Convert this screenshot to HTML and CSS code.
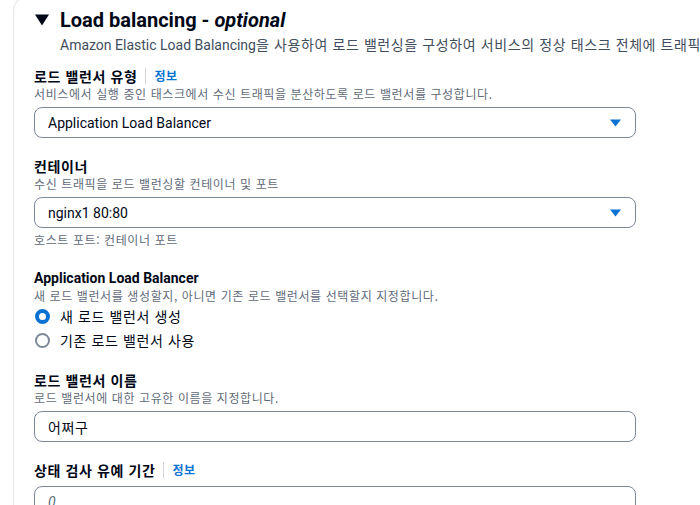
FILE: index.html
```html
<!DOCTYPE html>
<html lang="ko">
<head>
<meta charset="utf-8">
<link rel="stylesheet" href="styles.css">
</head>
<body>
<div class="card">
  <div class="header">
    <h2 class="title">
      <svg class="caret-down" width="14" height="12" viewBox="0 0 14 12"><path d="M0 0.5 H14 L7 11.5 Z" fill="#000716"/></svg>
      <span>Load balancing - <em>optional</em></span>
    </h2>
    <p class="intro">Amazon Elastic Load Balancing<span class="ko">을 사용하여 로드 밸런싱을 구성하여 서비스의 정상 태스크 전체에 트래픽을 고르게 분산합니다.</span></p>
  </div>

  <div class="fields">
    <div class="field">
      <div class="label"><span class="ko">로드 밸런서 유형</span><span class="divider"></span><a class="info ko">정보</a></div>
      <div class="desc ko">서비스에서 실행 중인 태스크에서 수신 트래픽을 분산하도록 로드 밸런서를 구성합니다.</div>
      <div class="control select">
        <span>Application Load Balancer</span>
        <svg class="sel-caret" width="11" height="8" viewBox="0 0 11 8"><path d="M0 0.5 H11 L5.5 7.5 Z" fill="#0972d3"/></svg>
      </div>
    </div>

    <div class="field">
      <div class="label ko">컨테이너</div>
      <div class="desc ko">수신 트래픽을 로드 밸런싱할 컨테이너 및 포트</div>
      <div class="control select">
        <span>nginx1 80:80</span>
        <svg class="sel-caret" width="11" height="8" viewBox="0 0 11 8"><path d="M0 0.5 H11 L5.5 7.5 Z" fill="#0972d3"/></svg>
      </div>
      <div class="hint ko">호스트 포트: 컨테이너 포트</div>
    </div>

    <div class="field">
      <div class="label">Application Load Balancer</div>
      <div class="desc ko">새 로드 밸런서를 생성할지, 아니면 기존 로드 밸런서를 선택할지 지정합니다.</div>
      <div class="radios">
        <div class="radio"><span class="dot checked"></span><span class="ko">새 로드 밸런서 생성</span></div>
        <div class="radio"><span class="dot"></span><span class="ko">기존 로드 밸런서 사용</span></div>
      </div>
    </div>

    <div class="field">
      <div class="label ko">로드 밸런서 이름</div>
      <div class="desc ko">로드 밸런서에 대한 고유한 이름을 지정합니다.</div>
      <div class="control input"><span class="ko">어쩌구</span></div>
    </div>

    <div class="field">
      <div class="label"><span class="ko">상태 검사 유예 기간</span><span class="divider"></span><a class="info ko">정보</a></div>
      <div class="control input no-desc"><span class="placeholder">0</span></div>
    </div>
  </div>
</div>
</body>
</html>
```

FILE: styles.css
```css
* { box-sizing: border-box; }
html, body {
  margin: 0;
  padding: 0;
  background: #ffffff;
  overflow: hidden;
  width: 700px;
  height: 505px;
}
body {
  font-family: Roboto, "Noto Sans CJK KR", sans-serif;
  color: #000716;
}
.ko {
  font-family: "Noto Sans CJK KR", sans-serif;
  letter-spacing: 0.6px;
}
.card {
  margin-left: 13px;
  margin-top: -5px;
  width: 687px;
  height: 515px;
  overflow: hidden;
  border: 1px solid #e3e6ea;
  border-right: none;
  border-bottom: none;
  border-radius: 16px 0 0 0;
  padding: 12px 0 0 20px;
}
.title {
  margin: 0;
  display: flex;
  align-items: center;
  font-size: 20px;
  line-height: 24px;
  font-weight: 700;
  height: 24px;
}
.title em { font-style: italic; font-weight: 700; }
.caret-down {
  margin-left: 1px;
  margin-right: 11px;
  flex: none;
}
.intro {
  margin: 2px 0 0 26px;
  font-size: 14px;
  line-height: 20px;
  color: #414d5c;
  white-space: nowrap;
}
.fields {
  margin-top: 11px;
  display: flex;
  flex-direction: column;
  gap: 18px;
  width: 602px;
}
.field {
  display: flex;
  flex-direction: column;
}
.label {
  display: flex;
  align-items: center;
  font-size: 14px;
  line-height: 20px;
  font-weight: 700;
  color: #000716;
}
.divider {
  display: inline-block;
  width: 1px;
  height: 16px;
  background: #d1d5db;
  margin: 0 8px 0 8px;
}
.info {
  font-size: 12px;
  font-weight: 700;
  color: #0972d3;
}
.desc {
  font-size: 12px;
  line-height: 16px;
  color: #5f6b7a;
  white-space: nowrap;
}
.hint {
  margin-top: 4px;
  font-size: 12px;
  line-height: 16px;
  color: #5f6b7a;
  margin-bottom: 2px;
}
.control {
  margin-top: 5px;
  height: 31px;
  border: 1px solid #7d8998;
  border-radius: 8px;
  display: flex;
  align-items: center;
  padding: 0 14px 0 13px;
  font-size: 14px;
  color: #000716;
}
.control.no-desc { margin-top: 6px; }
.select { justify-content: space-between; }
.sel-caret { flex: none; margin-top: 1px; }
.placeholder {
  font-style: italic;
  color: #5f6b7a;
}
.radios {
  display: flex;
  flex-direction: column;
}
.radio {
  display: flex;
  align-items: center;
  height: 24px;
  font-size: 14px;
  color: #000716;
}
.dot {
  width: 15px;
  height: 15px;
  border-radius: 50%;
  border: 2px solid #7d8998;
  margin: 0 10px 0 1px;
  flex: none;
}
.dot.checked {
  border: 4.5px solid #0972d3;
  background: #ffffff;
}
```
